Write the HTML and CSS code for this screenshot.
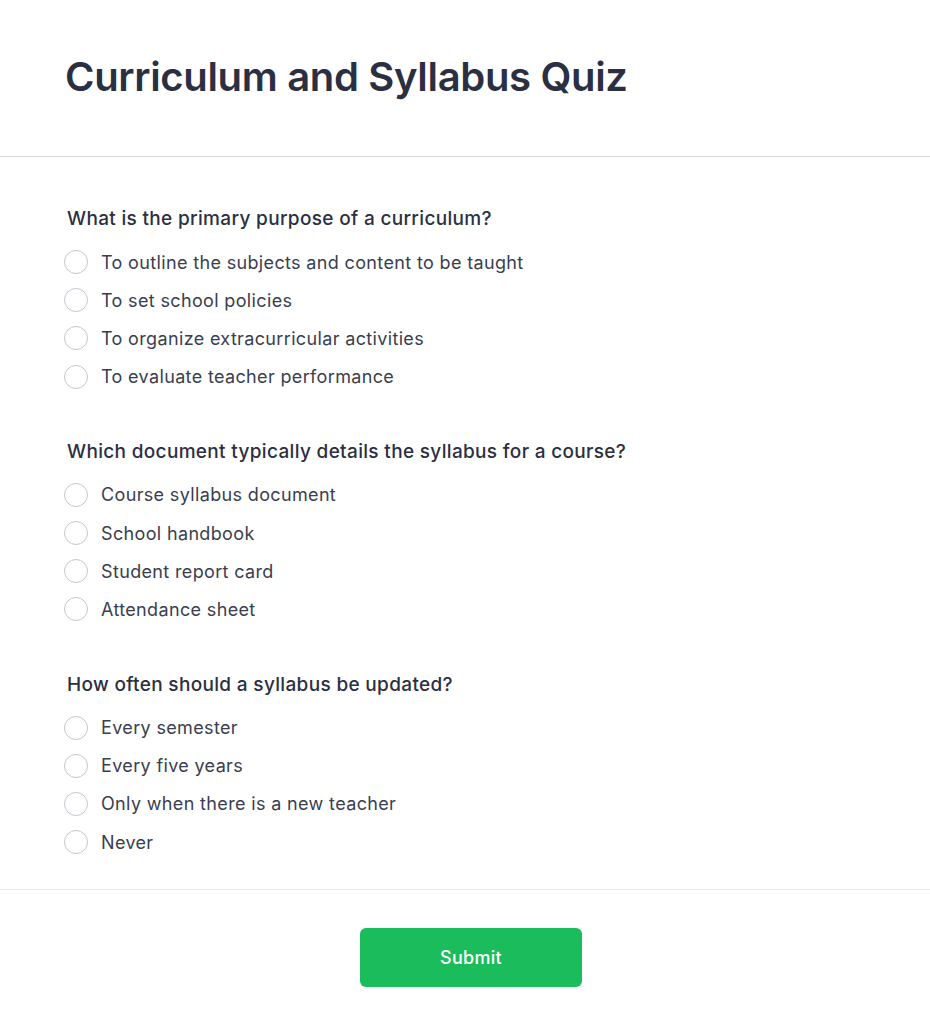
FILE: index.html
```html
<!DOCTYPE html>
<html lang="en">
<head>
<meta charset="utf-8">
<title>Curriculum and Syllabus Quiz</title>
<link rel="stylesheet" href="styles.css">
</head>
<body>
<div class="page">
  <header class="header">
    <h1 class="title">Curriculum and Syllabus Quiz</h1>
  </header>
  <form class="quiz">
    <div class="questions">
      <fieldset class="question">
        <legend class="q-text">What is the primary purpose of a curriculum?</legend>
        <label class="option"><span class="radio"></span><span>To outline the subjects and content to be taught</span></label>
        <label class="option"><span class="radio"></span><span>To set school policies</span></label>
        <label class="option"><span class="radio"></span><span>To organize extracurricular activities</span></label>
        <label class="option"><span class="radio"></span><span>To evaluate teacher performance</span></label>
      </fieldset>
      <fieldset class="question">
        <legend class="q-text">Which document typically details the syllabus for a course?</legend>
        <label class="option"><span class="radio"></span><span>Course syllabus document</span></label>
        <label class="option"><span class="radio"></span><span>School handbook</span></label>
        <label class="option"><span class="radio"></span><span>Student report card</span></label>
        <label class="option"><span class="radio"></span><span>Attendance sheet</span></label>
      </fieldset>
      <fieldset class="question">
        <legend class="q-text">How often should a syllabus be updated?</legend>
        <label class="option"><span class="radio"></span><span>Every semester</span></label>
        <label class="option"><span class="radio"></span><span>Every five years</span></label>
        <label class="option"><span class="radio"></span><span>Only when there is a new teacher</span></label>
        <label class="option"><span class="radio"></span><span>Never</span></label>
      </fieldset>
    </div>
    <div class="footer">
      <button type="button" class="submit">Submit</button>
    </div>
  </form>
</div>
</body>
</html>
```

FILE: styles.css
```css
* { box-sizing: border-box; }
html, body { margin: 0; padding: 0; background: #ffffff; }
body {
  font-family: Inter, "Noto Sans", "Liberation Sans", sans-serif;
  color: #2d3142;
}
.header {
  padding: 53px 65px 55px;
  border-bottom: 1px solid #d9dbe6;
}
.title {
  margin: 0;
  font-size: 40px;
  line-height: 48px;
  font-weight: 600;
  letter-spacing: -0.33px;
  color: #2b2f42;
}
.questions {
  padding: 48px 67px 28px;
  display: flex;
  flex-direction: column;
  gap: 42px;
  border-bottom: 1px solid #e6e7ee;
}
.question {
  border: 0;
  margin: 0;
  padding: 0;
  display: flex;
  flex-direction: column;
}
.q-text {
  padding: 0;
  font-size: 19px;
  line-height: 28px;
  font-weight: 500;
  letter-spacing: 0.33px;
  color: #2b2f42;
  margin-bottom: 10px;
}
.option {
  display: flex;
  align-items: center;
  gap: 13px;
  height: 38.2px;
  margin-left: -3px;
  font-size: 18px;
  letter-spacing: 0.35px;
  color: #3a3e4f;
}
.radio {
  width: 24px;
  height: 24px;
  border-radius: 50%;
  border: 1.5px solid #c4c7cf;
  background: #fff;
  flex: none;
}
.footer {
  display: flex;
  justify-content: center;
  padding: 38px 0 50px;
}
.submit {
  width: 222px;
  height: 59px;
  border: 0;
  border-radius: 6px;
  background: #1abc5c;
  color: #ffffff;
  font-family: Inter, "Noto Sans", sans-serif;
  font-size: 18px;
  font-weight: 500;
  letter-spacing: 0.3px;
  margin-left: 12px;
}
```
